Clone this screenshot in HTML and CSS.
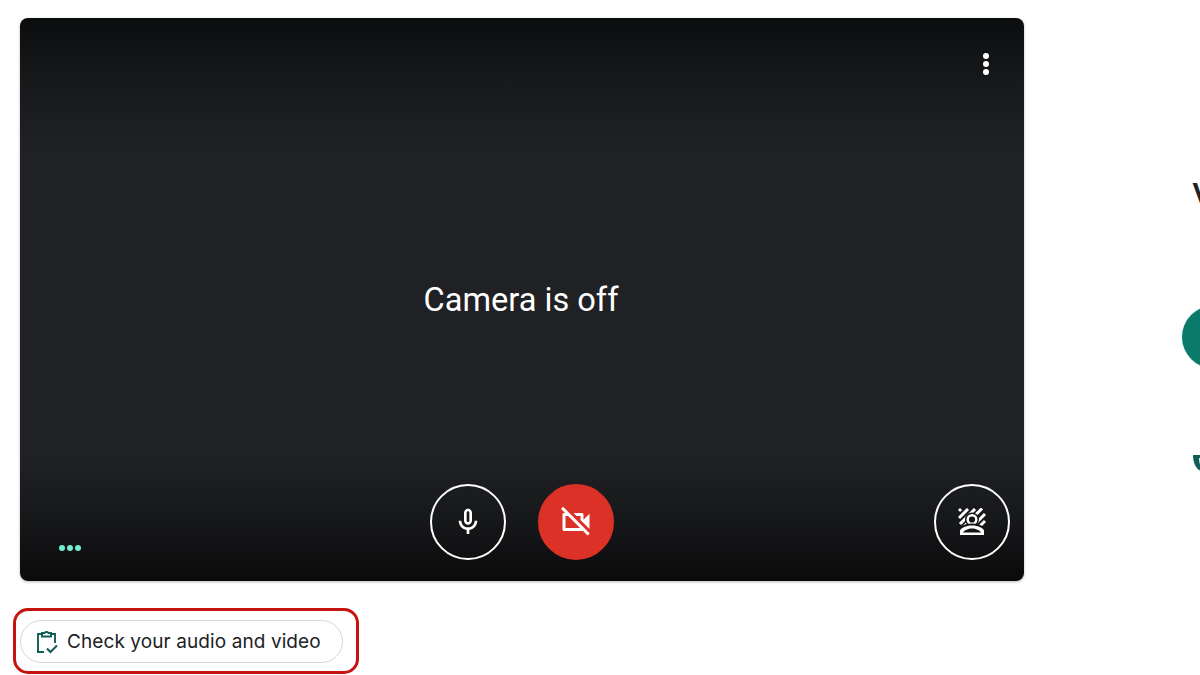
FILE: index.html
```html
<!DOCTYPE html>
<html lang="en">
<head>
<meta charset="utf-8">
<title>Camera is off</title>
<link rel="stylesheet" href="styles.css">
</head>
<body>
<div class="page">
  <section class="left">
    <div class="video">
      <div class="top-row">
        <div class="more"><i></i><i></i><i></i></div>
      </div>
      <div class="status">Camera is off</div>
      <div class="bottom-row">
        <div class="dots"><i></i><i></i><i></i></div>
        <div class="controls">
          <div class="round">
            <svg class="ic-mic" viewBox="0 0 24 24"><path fill="#fff" d="M12 14c1.660 0 3-1.340 3-3V5c0-1.660-1.340-3-3-3S9 3.340 9 5v6c0 1.660 1.340 3 3 3zM11 5c0-.55.45-1 1-1s1 .45 1 1v6c0 .55-.45 1-1 1s-1-.45-1-1V5zM17 11c0 2.760-2.240 5-5 5s-5-2.240-5-5H5c0 3.530 2.610 6.430 6 6.920V21h2v-3.080c3.390-.49 6-3.390 6-6.920h-2z"/></svg>
          </div>
          <div class="round off">
            <svg class="ic-cam" viewBox="0 0 24 24"><path fill="#fff" d="M9.56 8l-2-2-4.150-4.140L2 3.270 4.730 6H4c-.55 0-1 .45-1 1v10c0 .55.45 1 1 1h12c.21 0 .39-.08.55-.18L19.730 21l1.410-1.410-8.860-8.860L9.560 8zM5 16V8h1.730l8 8H5zm10-8v2.610l6 6V6.500l-4 4V7c0-.55-.45-1-1-1h-5.610l2 2H15z"/></svg>
          </div>
        </div>
        <div class="round effects">
          <svg class="ic-fx" viewBox="0 0 28 28">
            <path stroke="#fff" stroke-width="3" fill="none" d="M1 3l2-2M1 10l9-9M2 16L17 1M4.500 20L24 .5M13 20l14-14M20 20l7-7"/>
            <circle cx="14" cy="11.500" r="7" fill="#141516"/>
            <circle cx="14" cy="11.500" r="4.300" fill="none" stroke="#fff" stroke-width="2.400"/>
            <path fill="#141516" d="M0 28v-6c0-3 7-6.500 14-6.500s14 3.500 14 6.500v6z"/>
            <path fill="#fff" d="M2 27v-4c0-3 6-5.500 12-5.500s12 2.500 12 5.500v4z"/>
            <path fill="#141516" d="M4.800 24.500c1.400-2 5.500-4 9.200-4s7.800 2 9.200 4z"/>
          </svg>
        </div>
      </div>
    </div>
    <div class="highlight">
      <div class="chip">
        <svg class="ic-check" viewBox="0 0 22 24" fill="none" stroke="#0f5f56" stroke-width="1.900">
          <path d="M6 4H2v18h6"/>
          <path d="M15 4h4v9"/>
          <path d="M6 3h2.500a2.500 2.500 0 0 1 4 0H15v3.500H6z"/>
          <path stroke-width="2.100" d="M11 18.500l3.500 3.500 6.500-6.500"/>
        </svg>
        <span class="chip-label">Check your audio and video</span>
      </div>
    </div>
  </section>
  <section class="right">
    <div class="title">V</div>
    <div class="avatar"></div>
    <svg class="shield" viewBox="0 0 16 16"><path fill="#0f5f56" d="M0 0h16v16H8C3 14 0 8 0 0z"/><path fill="#fff" d="M6 3h10v10H9C7 11 6 7 6 3z"/></svg>
  </section>
</div>
</body>
</html>
```
FILE: styles.css
```css
* { box-sizing: border-box; }
html, body { margin: 0; height: 100%; background: #fff; overflow: hidden; }
body { font-family: Roboto, "Liberation Sans", sans-serif; }
.page { display: flex; width: 1200px; height: 675px; overflow: hidden; padding: 18px 0 0 20px; }
.left { flex: 0 0 1004px; display: flex; flex-direction: column; }
.video {
  height: 563px;
  border-radius: 8px;
  display: grid;
  grid-template-rows: 1fr auto 1fr;
  background: linear-gradient(180deg, #0c0d0e 0, #17181a 60px, #202124 130px, #202124 440px, #17181a 500px, #0a0a0b 563px);
  box-shadow: 0 1px 3px rgba(60, 64, 67, .35);
}
.top-row { display: flex; justify-content: flex-end; padding: 35px 35px 0 0; }
.more { display: flex; flex-direction: column; gap: 2px; }
.more i { width: 6px; height: 6px; border-radius: 50%; background: #fff; display: block; }
.status { color: #fff; font-size: 32.6px; line-height: 38px; text-align: center; padding-right: 2px; }
.bottom-row {
  display: grid;
  grid-template-columns: 1fr auto 1fr;
  align-items: end;
  padding: 0 14px 21px 14px;
}
.dots { display: flex; gap: 2px; padding: 0 0 9px 25px; }
.dots i { width: 6px; height: 6px; border-radius: 50%; background: #72ecd2; display: block; }
.controls { display: flex; gap: 32px; }
.round {
  width: 76px; height: 76px; border-radius: 50%;
  border: 2px solid #fff;
  display: flex; align-items: center; justify-content: center;
}
.round.off { background: #dc3126; border-color: #dc3126; }
.effects { justify-self: end; }
.ic-mic { width: 32px; height: 32px; }
.ic-cam { width: 36px; height: 36px; }
.ic-fx { width: 28px; height: 28px; }
.highlight {
  margin: 27px 0 0 -7px;
  width: 346px;
  height: 66px;
  border: 3px solid #c5140f;
  border-radius: 15px;
  padding: 9px 0 0 4px;
}
.chip {
  width: 323px; height: 43px;
  border: 1.5px solid #d6d6d6;
  border-radius: 22px;
  display: flex; align-items: center;
  padding-left: 15px;
  gap: 9px;
}
.ic-check { width: 22px; height: 24px; flex: none; }
.chip-label { font-family: Inter, Roboto, sans-serif; font-size: 19px; letter-spacing: .09px; color: #202124; white-space: nowrap; }
.right { flex: 0 0 auto; margin-left: 158px; width: 80px; display: flex; flex-direction: column; align-items: flex-start; }
.title { font-family: Roboto, sans-serif; font-size: 42px; line-height: 48px; color: #202124; margin: 157px 0 0 10px; }
.avatar { width: 62px; height: 62px; border-radius: 50%; background: #0b7a6b; margin-top: 83px; box-shadow: 0 0 2px #bfe3dc; }
.shield { width: 16px; height: 16px; margin: 87px 0 0 11px; }
```
